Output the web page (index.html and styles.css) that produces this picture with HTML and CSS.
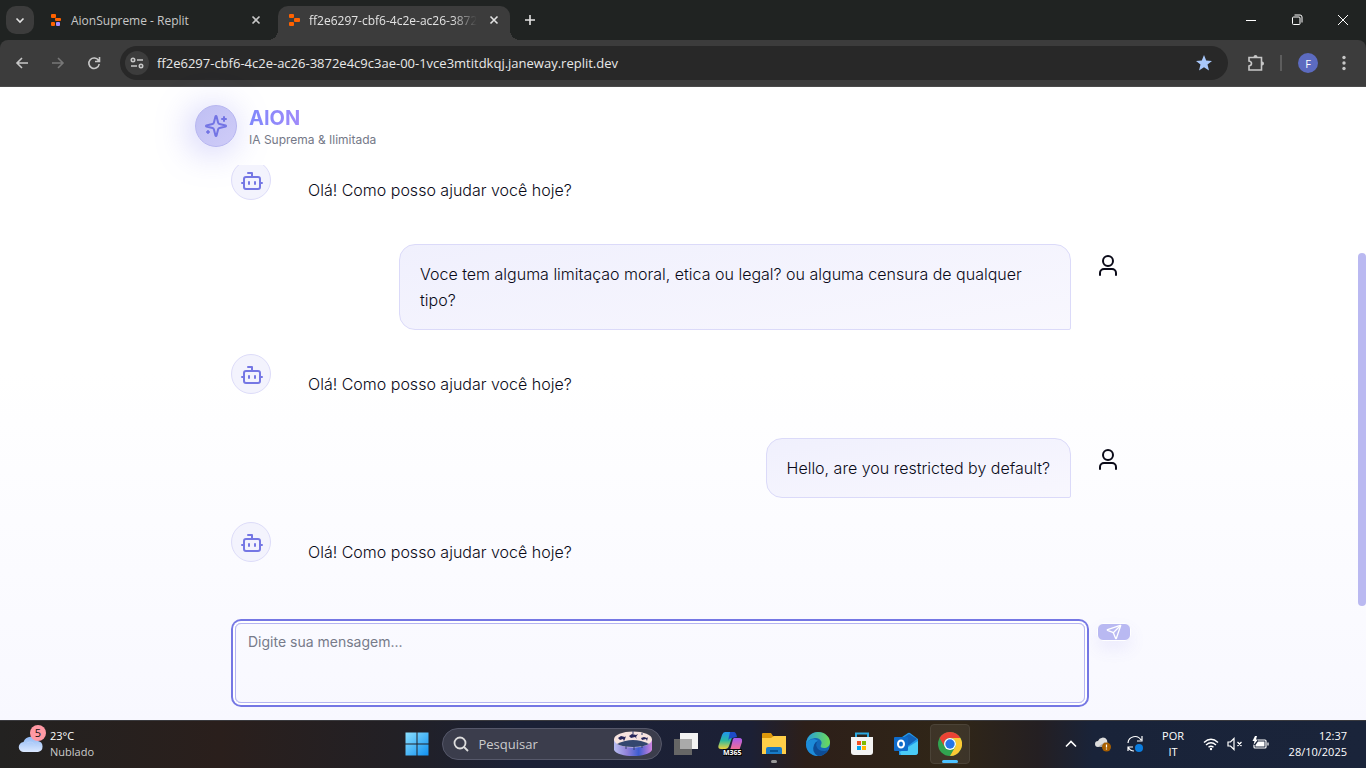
FILE: index.html
```html
<!DOCTYPE html>
<html lang="pt">
<head>
<meta charset="utf-8">
<title>AION</title>
<link rel="stylesheet" href="styles.css">
</head>
<body>
<svg class="defs" width="0" height="0" aria-hidden="true">
  <symbol id="bot" viewBox="0 0 24 24"><path d="M12 8V4H8"/><rect x="4" y="8" width="16" height="12" rx="2"/><path d="M2 14h2M20 14h2M15 13v2M9 13v2"/></symbol>
  <symbol id="user" viewBox="0 0 24 24"><path d="M20 22v-2a4 4 0 0 0-4-4H8a4 4 0 0 0-4 4v2"/><circle cx="12" cy="8" r="5"/></symbol>
  <symbol id="close" viewBox="0 0 10 10"><path d="M1.500 1.500l7 7M8.500 1.500l-7 7"/></symbol>
</svg>
<header class="browser">
  <div class="tabs">
    <button class="tab-search" aria-label="Pesquisar guias"><svg width="10" height="10" viewBox="0 0 10 10"><path d="M1.500 3.500L5 7l3.500-3.500"/></svg></button>
    <div class="tab">
      <svg class="favicon" width="12" height="12" viewBox="0 0 12 12"><rect x="1" width="5" height="4" rx="1" fill="#ff6200"/><rect x="5" y="4" width="6" height="3" rx="1" fill="#ff6200"/><rect x="1" y="8" width="4" height="4" rx="1" fill="#ff6200"/><rect x="6" y="8" width="4" height="4" rx="1" fill="#a58cff"/></svg>
      <span class="tab-title">AionSupreme - Replit</span>
      <button class="tab-close" aria-label="Fechar"><svg width="10" height="10"><use href="#close"/></svg></button>
    </div>
    <div class="tab tab-active">
      <svg class="favicon" width="12" height="12" viewBox="0 0 12 12"><rect x="1" width="5" height="4" rx="1" fill="#ff6200"/><rect x="6" y="4" width="6" height="4" rx="1" fill="#ff6200"/><rect x="1" y="8" width="5" height="4" rx="1" fill="#ff6200"/></svg>
      <span class="tab-title">ff2e6297-cbf6-4c2e-ac26-3872e</span>
      <button class="tab-close" aria-label="Fechar"><svg width="10" height="10"><use href="#close"/></svg></button>
    </div>
    <button class="new-tab" aria-label="Nova guia"><svg width="12" height="12" viewBox="0 0 12 12"><path d="M6 1v10M1 6h10"/></svg></button>
    <div class="window-buttons">
      <button aria-label="Minimizar"><svg width="12" height="12" viewBox="0 0 12 12"><path d="M1 6.500h10"/></svg></button>
      <button aria-label="Restaurar"><svg width="12" height="12" viewBox="0 0 12 12"><rect x="1.500" y="3" width="7.500" height="7.500" rx="1"/><path d="M3.500 1h5.500a2 2 0 0 1 2 2v5.500"/></svg></button>
      <button aria-label="Fechar janela"><svg width="12" height="12" viewBox="0 0 12 12"><path d="M1 1l10 10M11 1L1 11"/></svg></button>
    </div>
  </div>
  <div class="toolbar">
    <button class="nav" aria-label="Voltar"><svg width="14" height="14" viewBox="0 0 14 14"><path d="M13 7H2M7 2L2 7l5 5"/></svg></button>
    <button class="nav nav-off" aria-label="Avançar"><svg width="14" height="14" viewBox="0 0 14 14"><path d="M1 7h11M7 2l5 5-5 5"/></svg></button>
    <button class="nav" aria-label="Atualizar"><svg width="14" height="14" viewBox="0 0 14 14"><path d="M11.500 4.500A5.200 5.200 0 1 0 12.200 8M12.500 1v4.500H8"/></svg></button>
    <div class="omnibox">
      <button class="site-info" aria-label="Informações do site"><svg width="14" height="12" viewBox="0 0 14 12"><circle cx="3" cy="3" r="1.700"/><path d="M7 3h6M1 9h6"/><circle cx="11" cy="9" r="1.700"/></svg></button>
      <input class="url" aria-label="Endereço" value="ff2e6297-cbf6-4c2e-ac26-3872e4c9c3ae-00-1vce3mtitdkqj.janeway.replit.dev">
      <button class="star" aria-label="Favorito"><svg width="16" height="16" viewBox="0 0 16 16"><path d="M8 0l2.200 5.500 5.800.4-4.500 3.700L13 15.500 8 12.300l-5 3.200 1.500-5.900L0 5.900l5.800-.4z"/></svg></button>
    </div>
    <button class="extensions" aria-label="Extensões"><svg width="18" height="18" viewBox="0 0 18 18"><path d="M2 3.500h12.500V16H2v-4q2.500-.5 2.500-2.500T2 7z"/><path class="knob" d="M6.500 3a2 2 0 0 1 4 0zM15 7.500a2 2 0 0 1 0 4z"/></svg></button>
    <span class="divider"></span>
    <button class="profile" aria-label="Perfil">F</button>
    <button class="menu" aria-label="Menu"><svg width="4" height="16" viewBox="0 0 4 16"><circle cx="2" cy="2.500" r="1.700"/><circle cx="2" cy="8" r="1.700"/><circle cx="2" cy="13.500" r="1.700"/></svg></button>
  </div>
</header>

<main class="page">
  <div class="brand">
    <div class="brand-mark"><svg class="line-icon" width="24" height="24" viewBox="0 0 24 24"><path d="M9.940 15.500A2 2 0 0 0 8.500 14.060l-6.140-1.580a.5.5 0 0 1 0-.96L8.500 9.940A2 2 0 0 0 9.940 8.500l1.580-6.140a.5.5 0 0 1 .96 0L14.060 8.500a2 2 0 0 0 1.440 1.440l6.140 1.580a.5.5 0 0 1 0 .96L15.500 14.060a2 2 0 0 0-1.440 1.440l-1.580 6.140a.5.5 0 0 1-.96 0z"/><path d="M20 3v4M22 5h-4M4 17v2M5 18H3"/></svg></div>
    <div><h1>AION</h1><p>IA Suprema &amp; Ilimitada</p></div>
  </div>
  <div class="scroller">
    <div class="messages">
      <div class="row"><span class="avatar bot"><svg class="line-icon" width="24" height="24"><use href="#bot"/></svg></span><p class="text">Olá! Como posso ajudar você hoje?</p></div>
      <div class="row mine"><p class="text bubble">Voce tem alguma limitaçao moral, etica ou legal? ou alguma censura de qualquer tipo?</p><span class="avatar"><svg class="line-icon" width="24" height="24"><use href="#user"/></svg></span></div>
      <div class="row"><span class="avatar bot"><svg class="line-icon" width="24" height="24"><use href="#bot"/></svg></span><p class="text">Olá! Como posso ajudar você hoje?</p></div>
      <div class="row mine"><p class="text bubble">Hello, are you restricted by default?</p><span class="avatar"><svg class="line-icon" width="24" height="24"><use href="#user"/></svg></span></div>
      <div class="row"><span class="avatar bot"><svg class="line-icon" width="24" height="24"><use href="#bot"/></svg></span><p class="text">Olá! Como posso ajudar você hoje?</p></div>
    </div>
    <div class="rail"><div class="thumb"></div></div>
  </div>
  <form class="composer">
    <textarea aria-label="Mensagem" placeholder="Digite sua mensagem..."></textarea>
    <button type="button" class="send" aria-label="Enviar"><svg class="line-icon" width="16" height="16" viewBox="0 0 24 24"><path d="M14.500 21.700a.5.5 0 0 0 .94-.03l6.500-19a.5.5 0 0 0-.64-.64l-19 6.500a.5.5 0 0 0-.02.94l7.930 3.180a2 2 0 0 1 1.110 1.110z"/><path d="M21.850 2.150l-10.940 10.940"/></svg></button>
  </form>
</main>

<footer class="taskbar">
  <button class="weather">
    <span class="weather-icon">
      <svg width="26" height="18" viewBox="0 0 26 18"><defs><linearGradient id="cl" x2="0" y2="1"><stop stop-color="#8fb8f4"/><stop offset="1" stop-color="#dbe8ff"/></linearGradient></defs><path d="M6 17a5 5 0 0 1-.5-10A8 8 0 0 1 20 6a5.600 5.600 0 0 1 0 11z" fill="url(#cl)"/><path d="M9 8q5-3 9 3" fill="none" stroke="#b9d2fb"/></svg>
      <span class="count">5</span>
    </span>
    <span class="weather-text"><span>23°C</span><span class="dim">Nublado</span></span>
  </button>
  <nav class="apps">
    <button class="app" aria-label="Iniciar"><svg width="24" height="24" viewBox="0 0 24 24"><defs><linearGradient id="wn" x2="1" y2="1"><stop stop-color="#8be0ff"/><stop offset="1" stop-color="#1090f0"/></linearGradient></defs><path d="M.5.500h11v11H.5zM12.500.500h11v11h-11zM.5 12.500h11v11H.5zM12.500 12.500h11v11h-11z" fill="url(#wn)"/></svg></button>
    <label class="search">
      <svg width="16" height="16" viewBox="0 0 16 16" fill="none" stroke="#ddd" stroke-width="1.800"><circle cx="7" cy="7" r="5.500"/><path d="M11 11l4 4"/></svg>
      <input type="text" placeholder="Pesquisar">
      <svg width="38" height="26" viewBox="0 0 38 26"><defs><linearGradient id="zo" x2="1"><stop stop-color="#b7bdf0"/><stop offset=".35" stop-color="#8f7fd8"/><stop offset=".65" stop-color="#3d5cd0"/><stop offset="1" stop-color="#d084e0"/></linearGradient></defs><path d="M0 8v11c4 8 34 8 38 0V8z" fill="url(#zo)"/><ellipse cx="19" cy="8.500" rx="19" ry="8" fill="#f6e3df"/><path d="M3 13q16-8 32 0-5 3-16 3T3 13z" fill="#34476f"/><path d="M4 7l3-2 4 1 1-1-1 3-1 2-1-2-3 1zM15 5l3-2 4 1 2-1-2 3 1 2-2-2-4 1zM27 7l3-1 3 1 1-1-1 4-1-2-4 1z" fill="#26265b"/><path d="M12 15v3M20 15v4M28 14v3M19 0v3M28 2v2" stroke="#33406f"/></svg>
    </label>
    <button class="app" aria-label="Visão de tarefas"><svg width="24" height="24" viewBox="0 0 24 24"><path d="M6 1h18v16H6z" fill="#f3f3f3"/><path d="M0 7h18v16H0z" fill="#666"/><path d="M6 7h12v10H6z" fill="#aaa"/></svg></button>
    <button class="app" aria-label="Microsoft 365"><svg width="24" height="24" viewBox="0 0 24 24"><defs><linearGradient id="m1" x2="0" y2="1"><stop stop-color="#2094ef"/><stop offset=".5" stop-color="#2cb9a0"/><stop offset="1" stop-color="#f0d13a"/></linearGradient><linearGradient id="m2" x2="0" y2="1"><stop stop-color="#a65bef"/><stop offset="1" stop-color="#ff7184"/></linearGradient></defs><path d="M7 0h9l-5 14q-1 3-4 3H3q-4 0-2-5L4 3q1-3 3-3z" fill="url(#m1)"/><path d="M12 0h4q2 0 3 5l-5 1q-3 0-4 3z" fill="#1c4bc8"/><path d="M16 6h5q4 0 3 4l-3 9H9q3 0 4-4l2-8z" fill="url(#m2)"/><path d="M5 17h19v7H5z" fill="#080808"/><text class="badge-text" x="5" y="23">M365</text></svg></button>
    <button class="app running" aria-label="Explorador de Arquivos"><svg width="24" height="24" viewBox="0 0 24 24"><path d="M0 2q0-1 1-1h8l2 3h13v18H0z" fill="#dd980b"/><path d="M0 6h9l3-2h12v18H0z" fill="#ffcf48"/><path d="M4 22v-5q0-2 2-2h12q2 0 2 2v5z" fill="#187bc7"/><path d="M8 19h8" stroke="#075394" stroke-width="2"/></svg></button>
    <button class="app" aria-label="Edge"><svg width="24" height="24" viewBox="0 0 24 24"><defs><linearGradient id="ed" x2="1"><stop stop-color="#249ce2"/><stop offset="1" stop-color="#6ddc55"/></linearGradient></defs><circle cx="12" cy="12" r="12" fill="#1467b8"/><path d="M0 12C1 4 6 0 12 0c7 0 12 5 12 10 0 4-3 6-6 6-3 0-4-1-3-3 2-3-1-7-5-7S2 8 0 12z" fill="url(#ed)"/><path d="M0 12c2-5 9-6 12-3-5 1-5 9 0 12l4 2q-4 2-9 0C2 21 0 16 0 12z" fill="#1d8bd8"/><path d="M12 9c-4 3-1 11 7 10l3-1q-4 6-10 6-7-4-4-11 1-3 4-4z" fill="#0d4c96"/></svg></button>
    <button class="app" aria-label="Microsoft Store"><svg width="24" height="24" viewBox="0 0 24 24"><path d="M6 6V1.500h12V6" fill="none" stroke="#2ba8e0" stroke-width="2"/><path d="M1 5h22v15q0 3-3 3H4q-3 0-3-3z" fill="#f3f3f3"/><path d="M7 9h4v4H7z" fill="#f25022"/><path d="M12 9h4v4h-4z" fill="#7fba00"/><path d="M7 14h4v4H7z" fill="#00a4ef"/><path d="M12 14h4v4h-4z" fill="#ffb900"/></svg></button>
    <button class="app" aria-label="Outlook"><svg width="24" height="24" viewBox="0 0 24 24"><path d="M5 7l9-6q1-.7 2 0l8 6v13q0 3-3 3H5z" fill="#2196e8"/><path d="M6 8l9-6 8 5-12 9z" fill="#1463b8"/><path d="M24 9v11q0 3-3 3H7l-1-3z" fill="#4acbf5"/><rect y="5" width="14" height="14" rx="1" fill="#0f6ccb"/><ellipse cx="7" cy="12" rx="3" ry="3.500" fill="none" stroke="#fff" stroke-width="2"/></svg></button>
    <button class="app current" aria-label="Chrome"><svg width="24" height="24" viewBox="0 0 24 24"><circle cx="12" cy="12" r="12" fill="#31a350"/><path d="M1.600 6A12 12 0 0 1 22.400 6H12a6 6 0 0 0-5.200 9z" fill="#ea4335"/><path d="M22.400 6A12 12 0 0 1 12 24l5.200-9A6 6 0 0 0 12 6z" fill="#fcc934"/><circle cx="12" cy="12" r="6" fill="#fff"/><circle cx="12" cy="12" r="4.700" fill="#2675e8"/></svg></button>
  </nav>
  <div class="tray">
    <button class="tray-btn" aria-label="Ícones ocultos"><svg width="12" height="12" viewBox="0 0 12 12"><path d="M1 8.500l5-5 5 5" stroke-width="1.600"/></svg></button>
    <button class="tray-btn" aria-label="OneDrive"><svg width="16" height="16" viewBox="0 0 16 16"><path d="M3 11a3 3 0 0 1 0-6 5 5 0 0 1 9-1l1 7z" fill="#ddd" stroke="none"/><path d="M3 11l7-5 3 5z" fill="#a6a6a6" stroke="none"/><circle cx="11.500" cy="11" r="4.500" fill="#a85f00" stroke="none"/><path d="M11.500 8.500v3M11.500 12.500v1"/></svg></button>
    <button class="tray-btn" aria-label="Sincronização"><svg width="18" height="18" viewBox="0 0 18 18"><path d="M2 8a7 7 0 0 1 13-3M16 1v5h-5M2 16v-4h5M2 12q2 4 6 4" /><circle cx="13" cy="13" r="4" fill="#0a7de0" stroke="none"/></svg></button>
    <button class="lang"><span>POR</span><span>IT</span></button>
    <button class="status" aria-label="Rede, som e bateria">
      <svg width="16" height="16" viewBox="0 0 16 16"><path d="M1 6.500q7-6.500 14 0M3 9q5-4.500 10 0M5.500 11.300q2.500-2.200 5 0" stroke-width="1.400"/><circle cx="8" cy="13" r="1.200" fill="#fff" stroke="none"/></svg>
      <svg width="16" height="16" viewBox="0 0 16 16"><path d="M1 6h2.500L7 2.500v11L3.500 10H1zM10.500 6l4 4M14.500 6l-4 4"/></svg>
      <svg width="18" height="16" viewBox="0 0 18 16"><path d="M7 4h7q1 0 1 1v6q0 1-1 1H4q-1 0-1-1V9M17 6.500v3"/><path d="M7 5.500h6.500v5H4.500V9z" fill="#fff" stroke="none"/><path d="M4 0L1.500 5h2L2.500 9 7 3.500H5L6 0z" fill="#fff" stroke="none"/></svg>
    </button>
    <button class="clock"><span>12:37</span><span>28/10/2025</span></button>
  </div>
</footer>
</body>
</html>
```
FILE: styles.css
```css
* { box-sizing: border-box; margin: 0; }
body { display: flex; flex-direction: column; height: 100vh; overflow: hidden; font-family: Inter, sans-serif; color: #0a0a18; }
button, input, textarea { font: inherit; color: inherit; background: none; border: 0; padding: 0; outline: 0; }
button { display: flex; align-items: center; justify-content: center; flex: none; }
svg { display: block; flex: none; }
.defs { position: absolute; }
.line-icon { fill: none; stroke: currentColor; stroke-width: 2; stroke-linecap: round; stroke-linejoin: round; }

/* Browser window */
.browser { flex: none; background: #202322; font-family: "Open Sans", sans-serif; color: #e3e3e3; }
.browser button svg { fill: none; stroke: currentColor; stroke-width: 1.600; }
.tabs { display: flex; align-items: center; height: 40px; padding-left: 6px; font-size: 12px; }
.tab-search { width: 28px; height: 28px; border-radius: 10px; background: #3c3c3c; }
.tab { display: flex; align-items: center; align-self: flex-end; gap: 9px; width: 232px; height: 34px; margin-left: 6px; padding: 0 8px 6px 10px; color: #c7c7c7; }
.tab-active { position: relative; background: #3c3c3c; border-radius: 10px 10px 0 0; color: #e3e3e3; }
.tab-active::before, .tab-active::after { content: ""; position: absolute; bottom: 0; width: 10px; height: 10px; }
.tab-active::before { right: 100%; background: radial-gradient(circle at 0 0, transparent 10px, #3c3c3c 10px); }
.tab-active::after { left: 100%; background: radial-gradient(circle at 100% 0, transparent 10px, #3c3c3c 10px); }
.tab-title { flex: 1; min-width: 0; white-space: nowrap; }
.tab-active .tab-title { mask-image: linear-gradient(90deg, #000 85%, transparent); }
.tab-close { width: 16px; height: 16px; }
.new-tab { width: 40px; height: 28px; }
.window-buttons { display: flex; margin-left: auto; color: #fff; }
.window-buttons button { width: 46px; height: 40px; }
.browser .window-buttons svg { stroke-width: 1; }
.toolbar { display: flex; align-items: center; height: 47px; padding: 0 12px 0 4px; border-bottom: 1px solid #4a4a4a; background: #3c3c3c; border-radius: 8px 8px 0 0; color: #c7c7c7; }
.nav { width: 36px; height: 34px; }
.nav-off { color: #777; }
.omnibox { display: flex; align-items: center; flex: 1; gap: 8px; height: 34px; margin: 0 16px 0 8px; padding: 0 16px 0 5px; border-radius: 17px; background: #282828; }
.site-info { width: 24px; height: 24px; border-radius: 50%; background: #3c3c3c; }
.url { flex: 1; min-width: 0; font-size: 13px; color: #e8e8e8; }
.browser .star svg { fill: #a8c7fa; stroke: none; }
.extensions { width: 24px; }
.browser .extensions .knob { fill: currentColor; stroke: none; }
.divider { width: 2px; height: 16px; margin: 0 16px 0 12px; background: #5d5d5d; }
.profile { width: 20px; height: 20px; border-radius: 50%; background: #5c6bc0; color: #fff; font-size: 11px; }
.menu { width: 20px; margin-left: 16px; }
.browser .menu svg { fill: currentColor; stroke: none; }

/* Chat page */
.page { display: flex; flex-direction: column; flex: 1; min-height: 0; background: linear-gradient(#fff 45%, #f8f8ff); }
.brand { display: flex; align-items: center; gap: 12px; width: 100%; max-width: 1024px; margin: 0 auto; padding: 17px 24px; }
.brand-mark { display: grid; place-items: center; width: 42px; height: 42px; border: 1px solid #b6b5f0; border-radius: 50%; background: linear-gradient(135deg, #bfbff3, #cfccf8); color: #7374e4; box-shadow: -4px 4px 36px rgba(115, 112, 240, .4); }
h1 { font-size: 20px; line-height: 28px; width: fit-content; background: linear-gradient(90deg, #8088fb, #a08afa); background-clip: text; color: transparent; }
.brand p { font-size: 12px; line-height: 16px; color: #747887; }
.scroller { display: flex; flex: 1; min-height: 0; overflow: hidden; }
.messages { display: flex; flex-direction: column; justify-content: flex-end; flex: 1; max-width: 896px; margin: 0 auto; gap: 24px; padding-bottom: 24px; }
.rail { display: flex; align-items: flex-end; width: 8px; }
.thumb { width: 8px; height: 80%; border-radius: 4px; background: #bab9f1; }
.row { display: flex; gap: 16px; flex: none; }
.mine { justify-content: flex-end; }
.avatar { display: grid; place-items: center; flex: none; width: 40px; height: 40px; padding: 2px 0 0 2px; }
.bot { border: 1px solid #dddcf9; border-radius: 50%; background: #f3f3fd; color: #7577e4; }
.text { max-width: 672px; padding: 16px 20px; border: 1px solid transparent; font-size: 16px; font-weight: 300; line-height: 26px; }
.bubble { border-color: #dbdaf9; border-radius: 16px 16px 2px 16px; background: linear-gradient(170deg, #f0f0fd, #f8f7fe); }
.composer { display: flex; align-items: flex-start; gap: 12px; width: 100%; max-width: 896px; margin: 0 auto; padding: 17px 0; }
.composer textarea { flex: 1; height: 80px; padding: 8px 12px; resize: none; border: 1px solid #b4b4f2; border-radius: 6px; font-size: 14px; line-height: 20px; box-shadow: 0 0 0 2px #fff, 0 0 0 4px #7577e4; }
.composer textarea::placeholder { color: #777b8a; opacity: 1; }
.send { width: 34px; height: 18px; border: 1px solid #fff; border-radius: 6px; background: #b9b9f2; color: #fff; box-shadow: 0 8px 16px rgba(115, 112, 240, .1); }

/* Desktop taskbar */
.taskbar { display: grid; grid-template-columns: 1fr auto 1fr; align-items: center; flex: none; height: 48px; box-shadow: inset 0 1px #3a3a3e; background: linear-gradient(90deg, #232221, #2a1f1c 16%, #222025 29%, #1b2136 38%, #1c2035 55%, #2d1f19 59%, #302617 70%, #241f22 76%, #192339 80%, #1a243a); font-family: "Open Sans", sans-serif; font-size: 11px; line-height: 16px; color: #fff; }
.weather { justify-self: start; gap: 6px; padding-left: 18px; text-align: left; }
.weather-icon { position: relative; }
.count { position: absolute; top: -10px; right: -2px; width: 16px; height: 16px; border-radius: 50%; background: #ff99a4; color: #111; text-align: center; }
.weather-text, .lang, .clock { display: flex; flex-direction: column; }
.dim { color: #ccc; }
.apps { display: flex; align-items: center; }
.app { position: relative; width: 44px; height: 48px; }
.badge-text { font: bold 7px "Open Sans", sans-serif; fill: #fff; }
.search { display: flex; align-items: center; gap: 10px; width: 220px; height: 32px; margin: 0 2px 0 3px; padding: 0 9px 0 10px; border: 1px solid #56586a; border-radius: 16px; background: #3b3d4c; font-size: 13px; }
.search input { flex: 1; min-width: 0; }
.search input::placeholder { color: #ccc; opacity: 1; }
.running::after, .current::after { content: ""; position: absolute; bottom: 5px; width: 6px; height: 3px; border-radius: 2px; background: #999; }
.current::after { width: 16px; background: #4cc2ff; }
.current::before { content: ""; position: absolute; inset: 4px 2px; border: 1px solid #4b4337; border-radius: 4px; background: rgba(255, 255, 255, .07); }
.current svg { position: relative; }
.tray { display: flex; align-items: center; justify-self: end; padding-right: 19px; }
.tray svg { fill: none; stroke: #fff; stroke-width: 1.200; }
.tray-btn { width: 32px; height: 32px; }
.lang { width: 44px; }
.status { gap: 8px; margin: 0 16px 0 8px; }
.clock { align-items: flex-end; min-width: 62px; }
```
